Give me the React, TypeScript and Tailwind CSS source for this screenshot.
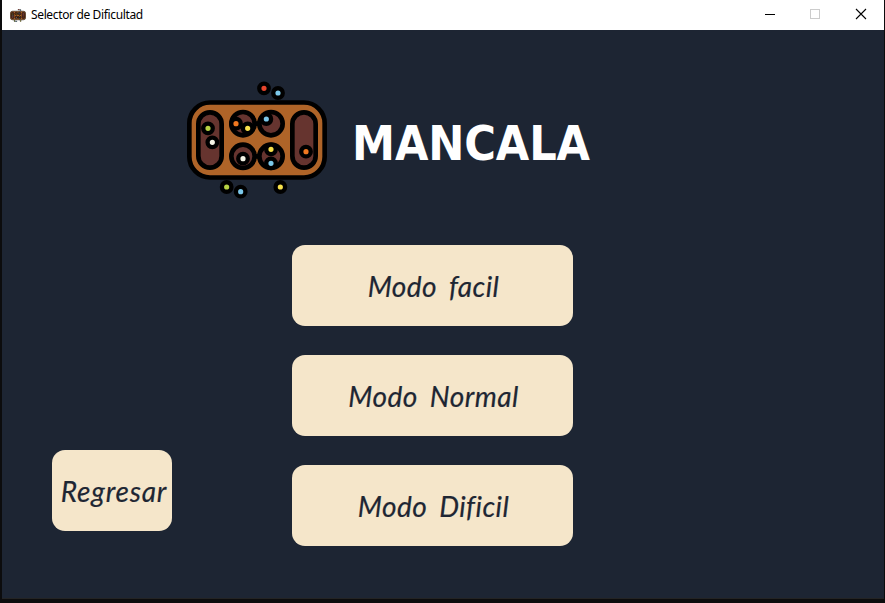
import React from "react";

const balls: [number, number, string][] = [
  [252, 40, "#e8452c"],
  [294, 54, "#7cc8ea"],
  [84, 160, "#b8d343"],
  [97, 202, "#f4f4e6"],
  [168, 146, "#f07820"],
  [203, 160, "#f7e14c"],
  [259, 132, "#7cc8ea"],
  [189, 251, "#f4f4e6"],
  [273, 223, "#f7e14c"],
  [273, 265, "#7cc8ea"],
  [378, 230, "#f07820"],
  [140, 336, "#b8d343"],
  [182, 350, "#7cc8ea"],
  [301, 336, "#f7e14c"],
];

function Board({ className, viewBox = "0 0 465 390" }: { className: string; viewBox?: string }) {
  return (
    <svg className={className} viewBox={viewBox} preserveAspectRatio="none">
      <rect x="28" y="82.5" width="406" height="225" rx="62" fill="#af6428" stroke="#000" strokeWidth="14" />
      <g fill="#66342f" stroke="#000" strokeWidth="14">
        <rect x="55" y="112" width="70" height="166" rx="35" />
        <rect x="337" y="112" width="70" height="166" rx="35" />
        <path d="M225 146h15M225 244h15" />
        <circle cx="189" cy="146" r="35" />
        <circle cx="273" cy="146" r="35" />
        <circle cx="189" cy="244" r="35" />
        <circle cx="273" cy="244" r="35" />
      </g>
      {balls.map(([x, y, c]) => (
        <circle key={`${x}-${y}`} cx={x} cy={y} r="14.25" fill={c} stroke="#000" strokeWidth="13" />
      ))}
    </svg>
  );
}

const btn =
  "flex h-[81px] items-center justify-center rounded-[13px] bg-[#f5e6ca] text-[#1e2633] font-['Lato','Open_Sans',sans-serif] italic text-[28px] leading-none whitespace-nowrap tracking-[0.45px] [word-spacing:5px] [font-variant-ligatures:none] [-webkit-text-stroke:0.2px_#1e2633]";

export default function App() {
  return (
    <div className="h-[603px] w-[885px] overflow-hidden bg-[#0c0c0d] pl-[2px] pr-px">
      <div className="flex h-[599px] flex-col border-b border-[#242424] bg-[#1d2533]">
        <header className="flex h-[30px] shrink-0 items-center bg-white pl-2">
          <Board className="h-[13px] w-[16px]" viewBox="20 25 422 340" />
          <span className="ml-[5px] grow font-['Noto_Sans','Open_Sans',sans-serif] text-[12px] tracking-[-0.36px] text-black">
            Selector de Dificultad
          </span>
          <svg className="h-[30px] w-[138px]" viewBox="0 0 138 30" fill="none" shapeRendering="crispEdges">
            <path d="M19 14.5h10" stroke="#000" />
            <rect x="64.5" y="9.5" width="9" height="9" stroke="#ccc" />
            <path d="M110 9l10 10M120 9l-10 10" stroke="#000" strokeWidth="1.1" shapeRendering="auto" />
          </svg>
        </header>
        <main className="flex grow flex-col">
          <div className="flex h-[215px] pl-[178px] pt-[45px]">
            <Board className="h-[130px] w-[155px]" />
            <h1 className="ml-[17px] mt-[34px] font-['DejaVu_Sans_Condensed','DejaVu_Sans',sans-serif] text-[48px] leading-[68px] font-bold [font-stretch:condensed] tracking-[-0.1px] text-white">
              MANCALA
            </h1>
          </div>
          <div className="flex pl-[50px]">
            <button className={`${btn} mt-[205px] w-[120px] pl-1`}>
              <span className="tracking-[0.8px]">Regresar</span>
            </button>
            <div className="ml-[120px] flex w-[281px] flex-col gap-[29px]">
              <button className={`${btn} pl-[2px]`}>Modo facil</button>
              <button className={`${btn} pl-[2px]`}>Modo Normal</button>
              <button className={`${btn} pl-[2px]`}>Modo Dificil</button>
            </div>
          </div>
        </main>
      </div>
    </div>
  );
}
